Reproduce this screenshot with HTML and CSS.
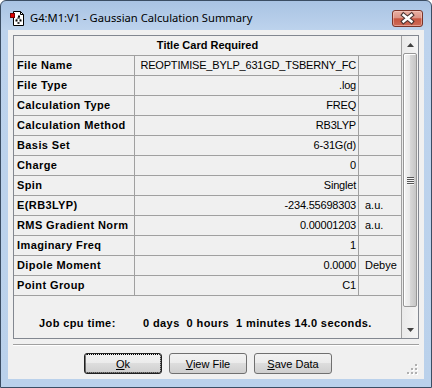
FILE: index.html
```html
<!DOCTYPE html>
<html>
<head>
<meta charset="utf-8">
<link rel="stylesheet" href="styles.css">
</head>
<body>
<div class="window">
  <div class="titlebar">
    <svg class="app-icon" viewBox="0 0 16 16">
      <path d="M4.5 1.5H11.5L14.5 4.5V15.5H4.5Z" fill="#fff" stroke="#000"/>
      <path d="M11.5 1.5V4.5H14.5" fill="none" stroke="#000"/>
      <path d="M9.5 6.5L7.5 10M9.5 6.5L11.5 10M9.5 6.5V9" stroke="#777" stroke-width="1"/>
      <rect x="9" y="5.5" width="2" height="2" fill="#000"/>
      <rect x="6.5" y="9.5" width="2" height="2" fill="#000"/>
      <rect x="10.5" y="9.5" width="2" height="2" fill="#000"/>
      <rect x="8.5" y="12" width="2" height="2" fill="#333"/>
      <rect x="1.5" y="3.5" width="4" height="4" fill="#e00000" stroke="#700"/>
    </svg>
    <span class="title">G4:M1:V1 - Gaussian Calculation Summary</span>
    <div class="close">
      <svg viewBox="0 0 29 15" width="29" height="15">
        <path d="M10.5 4L18.5 10.5M18.5 4L10.5 10.5" stroke="#4a3431" stroke-width="4.6" stroke-linecap="square"/>
        <path d="M10.5 4L18.5 10.5M18.5 4L10.5 10.5" stroke="#fff" stroke-width="2.4" stroke-linecap="square"/>
      </svg>
    </div>
  </div>
  <div class="frame-body">
    <div class="client">
      <div class="panel">
        <div class="grid-area">
          <div class="head">Title Card Required</div>
          <div class="row"><div class="label">File Name</div><div class="value">REOPTIMISE_BYLP_631GD_TSBERNY_FC</div><div class="unit"></div></div>
          <div class="row"><div class="label">File Type</div><div class="value">.log</div><div class="unit"></div></div>
          <div class="row"><div class="label">Calculation Type</div><div class="value">FREQ</div><div class="unit"></div></div>
          <div class="row"><div class="label">Calculation Method</div><div class="value">RB3LYP</div><div class="unit"></div></div>
          <div class="row"><div class="label">Basis Set</div><div class="value">6-31G(d)</div><div class="unit"></div></div>
          <div class="row"><div class="label">Charge</div><div class="value">0</div><div class="unit"></div></div>
          <div class="row"><div class="label">Spin</div><div class="value">Singlet</div><div class="unit"></div></div>
          <div class="row"><div class="label">E(RB3LYP)</div><div class="value">-234.55698303</div><div class="unit">a.u.</div></div>
          <div class="row"><div class="label">RMS Gradient Norm</div><div class="value">0.00001203</div><div class="unit">a.u.</div></div>
          <div class="row"><div class="label">Imaginary Freq</div><div class="value">1</div><div class="unit"></div></div>
          <div class="row"><div class="label">Dipole Moment</div><div class="value">0.0000</div><div class="unit">Debye</div></div>
          <div class="row"><div class="label">Point Group</div><div class="value">C1</div><div class="unit"></div></div>
          <div class="cpu"><span class="cpu-label">Job cpu time:</span><span class="cpu-value">0 days  0 hours  1 minutes 14.0 seconds.</span></div>
        </div>
        <div class="scrollbar">
          <div class="sb-btn">
            <svg width="7" height="4" viewBox="0 0 7 4"><path d="M0 4L3.5 0L7 4Z" fill="#404040"/></svg>
          </div>
          <div class="thumb">
            <div class="grip-lines"><i></i><i></i><i></i><i></i></div>
          </div>
          <div class="track"></div>
          <div class="sb-btn">
            <svg width="7" height="4" viewBox="0 0 7 4"><path d="M0 0L3.5 4L7 0Z" fill="#404040"/></svg>
          </div>
        </div>
      </div>
      <div class="separator"></div>
      <div class="buttons">
        <button class="btn btn-default"><u>O</u>k</button>
        <button class="btn"><u>V</u>iew File</button>
        <button class="btn"><u>S</u>ave Data</button>
      </div>
      <svg class="size-grip" width="12" height="12" viewBox="0 0 12 12">
        <rect x="9" y="1" width="2" height="2" fill="#fff"/><rect x="8" y="0" width="2" height="2" fill="#b0b0b0"/>
        <rect x="9" y="5" width="2" height="2" fill="#fff"/><rect x="8" y="4" width="2" height="2" fill="#b0b0b0"/>
        <rect x="5" y="5" width="2" height="2" fill="#fff"/><rect x="4" y="4" width="2" height="2" fill="#b0b0b0"/>
        <rect x="9" y="9" width="2" height="2" fill="#fff"/><rect x="8" y="8" width="2" height="2" fill="#b0b0b0"/>
        <rect x="5" y="9" width="2" height="2" fill="#fff"/><rect x="4" y="8" width="2" height="2" fill="#b0b0b0"/>
        <rect x="1" y="9" width="2" height="2" fill="#fff"/><rect x="0" y="8" width="2" height="2" fill="#b0b0b0"/>
      </svg>
    </div>
  </div>
</div>
</body>
</html>
```

FILE: styles.css
```css
* { box-sizing: border-box; }
html, body { margin: 0; padding: 0; }
body {
  width: 432px;
  height: 388px;
  overflow: hidden;
  background: #ffffff;
  font-family: "Liberation Sans", Arial, sans-serif;
  font-size: 11px;
  color: #000;
}
.window {
  width: 432px;
  height: 388px;
  border: 1px solid #3b4d63;
  border-radius: 6px 6px 0 0;
  background: linear-gradient(#a9c3e3, #bdd3ed 29px, #bad1eb);
  display: flex;
  flex-direction: column;
  overflow: hidden;
}
.titlebar {
  height: 29px;
  flex: none;
  display: flex;
  align-items: flex-start;
}
.app-icon {
  width: 16px;
  height: 16px;
  margin: 9px 0 0 8px;
  flex: none;
}
.title {
  margin: 9px 0 0 5px;
  font-family: "Noto Sans", "Open Sans", sans-serif;
  font-size: 11.2px;
  line-height: 16px;
  color: #000;
  white-space: nowrap;
}
.close {
  margin: 9px 8px 0 auto;
  width: 31px;
  height: 17px;
  flex: none;
  border: 1px solid #7a3429;
  border-radius: 3px;
  background: linear-gradient(#e9b0a3, #dc9486 45%, #c7553f 52%, #cd6b58);
  box-shadow: inset 0 0 0 1px rgba(255, 220, 210, 0.45);
}
.close svg { display: block; }
.frame-body {
  flex: 1;
  padding: 0 7px 8px 7px;
  display: flex;
}
.client {
  flex: 1;
  position: relative;
  background: #f0f0f0;
  padding: 5px;
  display: flex;
  flex-direction: column;
}
.panel {
  height: 304px;
  flex: none;
  border: 1px solid #828790;
  display: flex;
}
.grid-area {
  flex: 1;
  display: flex;
  flex-direction: column;
}
.head {
  height: 20px;
  border-bottom: 1px solid #a0a0a0;
  line-height: 19px;
  text-align: center;
  font-weight: bold;
}
.row {
  display: grid;
  grid-template-columns: 121px 224px 1fr;
  height: 20px;
  border-bottom: 1px solid #a0a0a0;
  line-height: 19px;
}
.row > div {
  white-space: nowrap;
  overflow: hidden;
}
.label {
  border-right: 1px solid #a0a0a0;
  padding-left: 3px;
  font-weight: bold;
  letter-spacing: 0.4px;
}
.value {
  border-right: 1px solid #a0a0a0;
  text-align: right;
  padding-right: 2px;
  letter-spacing: -0.2px;
}
.unit {
  padding-left: 6px;
}
.cpu {
  flex: 1;
  padding: 21px 0 0 25px;
  font-weight: bold;
  white-space: pre;
  letter-spacing: 0.4px;
}
.cpu-label {
  display: inline-block;
  width: 104px;
}
.scrollbar {
  width: 17px;
  flex: none;
  border-left: 1px solid #a0a0a0;
  display: flex;
  flex-direction: column;
  background: linear-gradient(to right, #eaeaea, #f4f4f4);
}
.sb-btn {
  height: 17px;
  flex: none;
  display: flex;
  align-items: center;
  justify-content: center;
}
.thumb {
  height: 254px;
  flex: none;
  margin: 0 1px;
  border: 1px solid #979797;
  border-radius: 2px;
  background: linear-gradient(to right, #f4f4f4, #e8e8e8 50%, #d8d8d8 50%, #c6c6c6);
  box-shadow: inset 1px 1px 0 #fff;
  display: flex;
  align-items: center;
  justify-content: center;
}
.grip-lines {
  display: flex;
  flex-direction: column;
  gap: 1px;
}
.grip-lines i {
  display: block;
  width: 7px;
  height: 1px;
  background: #555;
  box-shadow: 0 1px 0 #f5f5f5;
}
.track { flex: 1; }
.separator {
  flex: none;
  margin-top: 5px;
  height: 2px;
  border-top: 1px solid #a0a0a0;
  border-bottom: 1px solid #ffffff;
}
.buttons {
  flex: none;
  margin-top: 7px;
  display: flex;
  gap: 7px;
  padding-left: 71px;
}
.btn {
  width: 78px;
  height: 21px;
  padding: 0;
  border: 1px solid #707070;
  border-radius: 3px;
  background: linear-gradient(#f2f2f2, #ebebeb 50%, #dddddd 50%, #cfcfcf);
  font-family: "Liberation Sans", Arial, sans-serif;
  font-size: 11px;
  color: #000;
}
.btn-default {
  border-color: #202020;
  outline: 1px dotted #000;
  outline-offset: -2px;
}
.size-grip {
  position: absolute;
  right: 5px;
  bottom: 3px;
}
```
